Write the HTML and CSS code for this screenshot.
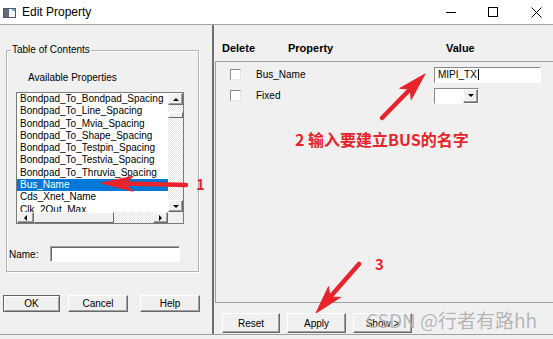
FILE: index.html
```html
<!DOCTYPE html>
<html lang="en">
<head>
    <meta charset="UTF-8">
    <meta name="viewport" content="width=device-width, initial-scale=1.0">
    <title>Edit Property</title>
    <link rel="stylesheet" href="styles.css">
</head>
<body>
<div class="window">
    <div class="titlebar">
        <svg class="app-icon" width="13" height="10" viewBox="0 0 13 10">
            <rect x="0.5" y="0.5" width="12" height="9" fill="#5f6d7c" stroke="#4a5663"/>
            <rect x="6" y="1" width="6" height="8" fill="#f4f6f8"/>
            <rect x="9" y="1" width="3" height="2" fill="#7fa6cc"/>
        </svg>
        <span class="title">Edit Property</span>
        <div class="win-controls">
            <svg class="ctl ctl-min" width="10" height="10" viewBox="0 0 10 10">
                <line x1="0" y1="5.5" x2="10" y2="5.5" stroke="#000" stroke-width="1"/>
            </svg>
            <svg class="ctl ctl-max" width="10" height="10" viewBox="0 0 10 10">
                <rect x="0.5" y="0.5" width="9" height="9" fill="none" stroke="#000" stroke-width="1"/>
            </svg>
            <svg class="ctl ctl-close" width="11" height="11" viewBox="0 0 11 11">
                <path d="M0.5 0.5 L10.5 10.5 M10.5 0.5 L0.5 10.5" stroke="#000" stroke-width="1"/>
            </svg>
        </div>
    </div>

    <div class="dialog">
        <div class="left-pane">
            <fieldset class="toc">
                <legend>Table of Contents</legend>
                <div class="avail-label">Available Properties</div>
                <div class="listbox">
                    <div class="list-items">
                        <div class="item">Bondpad_To_Bondpad_Spacing</div>
                        <div class="item">Bondpad_To_Line_Spacing</div>
                        <div class="item">Bondpad_To_Mvia_Spacing</div>
                        <div class="item">Bondpad_To_Shape_Spacing</div>
                        <div class="item">Bondpad_To_Testpin_Spacing</div>
                        <div class="item">Bondpad_To_Testvia_Spacing</div>
                        <div class="item">Bondpad_To_Thruvia_Spacing</div>
                        <div class="item selected">Bus_Name</div>
                        <div class="item">Cds_Xnet_Name</div>
                        <div class="item">Clk_2Out_Max</div>
                    </div>
                    <div class="vscroll">
                        <div class="sb-btn sb-up"><span class="tri tri-up"></span></div>
                        <div class="sb-track"><div class="sb-thumb sb-thumb-v"></div></div>
                        <div class="sb-btn sb-down"><span class="tri tri-down"></span></div>
                    </div>
                    <div class="hscroll">
                        <div class="sb-btn sb-left"><span class="tri tri-left"></span></div>
                        <div class="sb-thumb sb-thumb-h"></div>
                        <div class="sb-track"></div>
                        <div class="sb-btn sb-right"><span class="tri tri-right"></span></div>
                    </div>
                    <div class="sb-corner"></div>
                </div>
                <div class="name-row">
                    <label class="name-label">Name:</label>
                    <div class="textbox name-box"></div>
                </div>
            </fieldset>
            <div class="left-buttons">
                <button class="btn btn-default btn-ok">OK</button>
                <button class="btn btn-cancel">Cancel</button>
                <button class="btn btn-help">Help</button>
            </div>
        </div>

        <div class="right-pane">
            <div class="grid-head">
                <span class="col-delete">Delete</span>
                <span class="col-property">Property</span>
                <span class="col-value">Value</span>
            </div>
            <div class="grid">
                <div class="grid-row">
                    <span class="checkbox"></span>
                    <span class="prop-name">Bus_Name</span>
                    <div class="textbox value-box">MIPI_TX<span class="caret"></span></div>
                </div>
                <div class="grid-row">
                    <span class="checkbox"></span>
                    <span class="prop-name">Fixed</span>
                    <div class="combo">
                        <div class="combo-field"></div>
                        <div class="sb-btn combo-btn"><span class="tri tri-down"></span></div>
                    </div>
                </div>
            </div>
            <div class="right-buttons">
                <button class="btn btn-reset">Reset</button>
                <button class="btn btn-apply">Apply</button>
                <button class="btn btn-show">Show &gt;</button>
            </div>
        </div>
    </div>

    <!-- red annotations drawn on top of the screenshot -->
    <svg class="annotations" width="553" height="339" viewBox="0 0 553 339">
        <g fill="#e8232b" stroke="#e8232b" stroke-linejoin="round">
            <line x1="186" y1="185" x2="126" y2="183.6" stroke-width="4.5" stroke-linecap="round"/>
            <polygon points="101,183 133.2,176.2 125,183.6 132.8,191.2" stroke-width="1"/>

            <line x1="382" y1="118" x2="410.3" y2="89" stroke-width="4.5" stroke-linecap="round"/>
            <polygon points="425,74 411.2,99.6 410.3,89 399.7,88.4" stroke-width="1"/>

            <line x1="359" y1="264" x2="329.9" y2="297.2" stroke-width="4.5" stroke-linecap="round"/>
            <polygon points="316,313 328.5,286.7 329.9,297.2 340.5,297.3" stroke-width="1"/>
        </g>
    </svg>
    <span class="note note-1">1</span>
    <span class="note note-2">2 输入要建立BUS的名字</span>
    <span class="note note-3">3</span>
    <span class="watermark">CSDN @行者有路hh</span>
</div>
</body>
</html>
```

FILE: styles.css
```css
body {
    margin: 0;
    font-family: 'Liberation Sans', Arial, sans-serif;
    font-size: 10px;
    color: #000;
}

.window {
    position: relative;
    width: 553px;
    height: 339px;
    overflow: hidden;
    background-color: #f0f0f0;
}

/* title bar */
.titlebar {
    display: flex;
    align-items: center;
    height: 25px;
    background-color: #ffffff;
    border-bottom: 1px solid #a3a3a3;
    box-sizing: border-box;
}

.app-icon {
    margin-left: 3px;
    margin-top: 1px;
}

.title {
    margin-left: 6px;
    font-size: 12px;
    margin-top: -1px;
}

.win-controls {
    display: flex;
    align-items: center;
    margin-left: auto;
    padding-right: 11px;
}

.ctl-min {
    margin-top: -1px;
}

.ctl-max {
    margin-left: 32px;
}

.ctl-close {
    margin-left: 33px;
}

/* dialog body */
.dialog {
    display: flex;
    height: 310px;
    border-bottom: 1px solid #a0a0a0;
    box-sizing: border-box;
}

.left-pane {
    width: 212px;
    flex-shrink: 0;
    border-right: 2px solid #6e6e6e;
}

.toc {
    width: 193px;
    box-sizing: border-box;
    margin: 19px 0 0 6px;
    padding: 0 0 9px 0;
    border: 1px solid #b4b4b4;
    box-shadow: 1px 1px 0 #ffffff, inset 1px 1px 0 #ffffff;
}

.toc legend {
    padding: 0 1px;
    margin-left: 4px;
    line-height: 12px;
}

.avail-label {
    margin: 16px 0 0 21px;
    line-height: 12px;
}

.listbox {
    display: grid;
    grid-template-columns: 151px 15px;
    grid-template-rows: 119px 11px;
    width: 168px;
    height: 132px;
    box-sizing: border-box;
    margin: 8px 0 0 9px;
    border: 1px solid #7a7a7a;
    background-color: #ffffff;
}

.list-items {
    overflow: hidden;
    background-color: #ffffff;
}

.item {
    height: 12.3px;
    line-height: 12.3px;
    padding-left: 3px;
    white-space: nowrap;
}

.item.selected {
    background-color: #0078d7;
    color: #ffffff;
}

/* classic scroll bars */
.vscroll {
    display: flex;
    flex-direction: column;
}

.hscroll {
    display: flex;
}

.sb-track {
    flex: 1;
    background: repeating-conic-gradient(#ffffff 0 25%, #e4e4e4 0 50%) 0 0 / 2px 2px;
}

.sb-btn {
    display: flex;
    align-items: center;
    justify-content: center;
    box-sizing: border-box;
    background-color: #f0f0f0;
    border: 1px solid;
    border-color: #ffffff #6a6a6a #6a6a6a #ffffff;
    box-shadow: inset -1px -1px 0 #a0a0a0;
}

.sb-up,
.sb-down {
    height: 12px;
}

.sb-left {
    width: 17px;
}

.sb-right {
    width: 15px;
}

.sb-thumb {
    box-sizing: border-box;
    background-color: #f0f0f0;
    border: 1px solid;
    border-color: #ffffff #6a6a6a #6a6a6a #ffffff;
}

.sb-thumb-v {
    height: 6px;
    margin-top: 7px;
}

.sb-thumb-h {
    width: 80px;
}

.sb-corner {
    background-color: #f0f0f0;
}

.tri {
    width: 0;
    height: 0;
}

.tri-up {
    border-left: 3px solid transparent;
    border-right: 3px solid transparent;
    border-bottom: 3px solid #000;
}

.tri-down {
    border-left: 3px solid transparent;
    border-right: 3px solid transparent;
    border-top: 3px solid #000;
}

.tri-left {
    border-top: 3px solid transparent;
    border-bottom: 3px solid transparent;
    border-right: 3px solid #000;
}

.tri-right {
    border-top: 3px solid transparent;
    border-bottom: 3px solid transparent;
    border-left: 3px solid #000;
}

.name-row {
    display: flex;
    align-items: center;
    margin: 22px 0 0 2px;
}

.name-label {
    width: 41px;
}

.textbox {
    box-sizing: border-box;
    height: 16px;
    background-color: #ffffff;
    border: 1px solid;
    border-color: #a0a0a0 #ffffff #ffffff #a0a0a0;
    box-shadow: inset 1px 1px 0 #696969;
}

.name-box {
    width: 130px;
}

/* buttons */
.btn {
    box-sizing: border-box;
    padding: 0;
    font-family: 'Liberation Sans', Arial, sans-serif;
    font-size: 10px;
    color: #000;
    background-color: #f0f0f0;
    border: 1px solid;
    border-color: #ffffff #696969 #696969 #ffffff;
    box-shadow: inset -1px -1px 0 #a0a0a0;
}

.btn-default {
    border-color: #646464;
    box-shadow: inset 1px 1px 0 #ffffff, inset -1px -1px 0 #a0a0a0;
}

.left-buttons {
    display: flex;
    margin-top: 23px;
}

.left-buttons .btn {
    height: 17px;
}

.btn-ok {
    width: 57px;
    margin-left: 3px;
}

.btn-cancel {
    width: 60px;
    margin-left: 8px;
}

.btn-help {
    width: 60px;
    margin-left: 12px;
}

/* property grid */
.right-pane {
    flex: 1;
    display: flex;
    flex-direction: column;
}

.grid-head {
    display: flex;
    height: 36px;
    box-sizing: border-box;
    padding: 16px 0 0 8px;
    font-size: 11px;
    font-weight: bold;
    line-height: 14px;
}

.col-delete {
    width: 66px;
}

.col-property {
    width: 158px;
}

.grid {
    height: 242px;
    box-sizing: border-box;
    margin-left: 1px;
    padding-top: 2px;
    border-top: 1px solid #a0a0a0;
    border-left: 1px solid #a0a0a0;
    border-bottom: 1px solid #a0a0a0;
}

.grid-row {
    display: flex;
    align-items: center;
    height: 21px;
    padding-left: 14px;
}

.checkbox {
    width: 11px;
    height: 11px;
    box-sizing: border-box;
    background-color: #ffffff;
    border: 1px solid;
    border-color: #8a8a8a #e6e6e6 #e6e6e6 #8a8a8a;
}

.prop-name {
    width: 178px;
    margin-left: 15px;
}

.value-box {
    width: 107px;
    padding-left: 3px;
    line-height: 14px;
    box-shadow: none;
    border-color: #8a8a8a #ffffff #ffffff #8a8a8a;
}

.caret {
    display: inline-block;
    width: 1px;
    height: 11px;
    margin-left: 1px;
    vertical-align: -2px;
    background-color: #000;
}

.combo {
    display: flex;
    width: 45px;
    height: 16px;
    box-sizing: border-box;
    border: 1px solid;
    border-color: #8a8a8a #ffffff #ffffff #8a8a8a;
    background-color: #ffffff;
}

.combo-field {
    flex: 1;
}

.combo-btn {
    width: 15px;
}

.right-buttons {
    display: flex;
    padding: 10px 0 0 8px;
}

.right-buttons .btn {
    height: 20px;
    width: 59px;
    margin-right: 7px;
}

.btn-reset {
    width: 58px !important;
}

/* annotations */
.annotations {
    position: absolute;
    top: 0;
    left: 0;
    pointer-events: none;
}

.note {
    position: absolute;
    color: #e8232b;
    font-family: 'Noto Sans CJK SC', 'Noto Sans', sans-serif;
    font-weight: bold;
    font-size: 15px;
    line-height: 16px;
    white-space: nowrap;
}

.note-1 {
    left: 196px;
    top: 176px;
}

.note-2 {
    left: 295px;
    top: 131px;
    font-size: 16px;
}

.note-3 {
    left: 375px;
    top: 256px;
}

.watermark {
    position: absolute;
    left: 366px;
    top: 308px;
    font-family: 'Noto Sans CJK SC', 'Noto Sans', sans-serif;
    font-size: 19px;
    line-height: 24px;
    color: rgba(110, 110, 110, 0.5);
    text-shadow: 0 0 1px rgba(255, 255, 255, 0.8);
    white-space: nowrap;
}
```
